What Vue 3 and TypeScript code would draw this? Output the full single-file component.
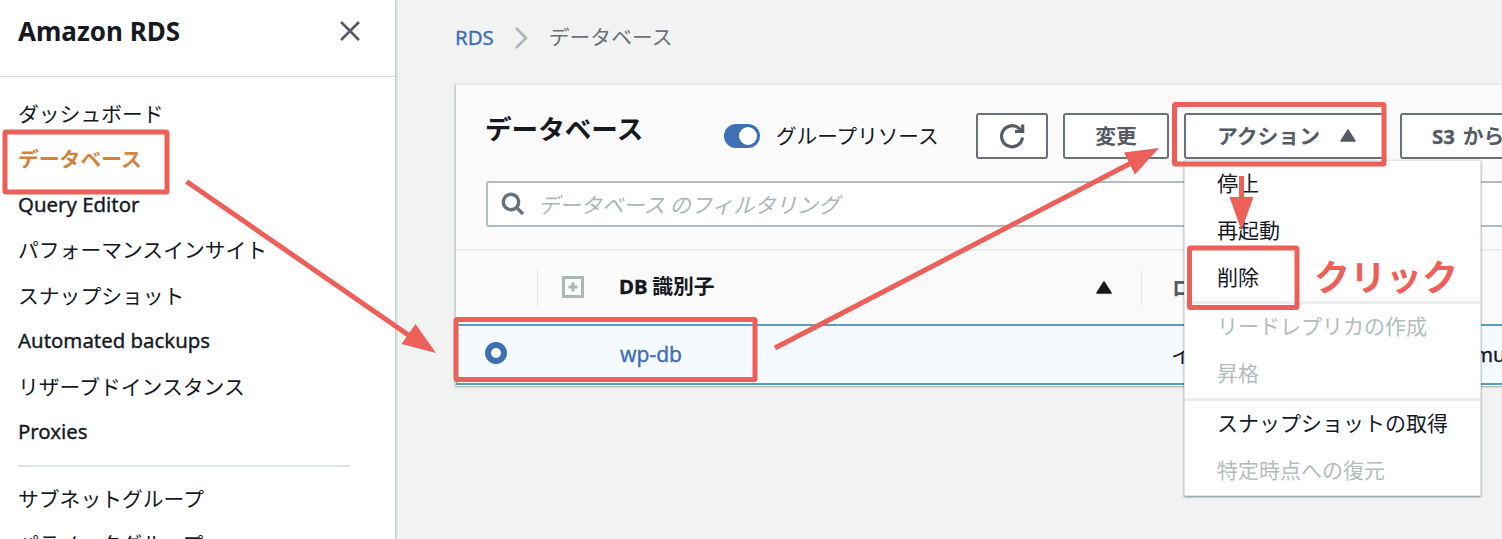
<script setup lang="ts">
interface NavItem { label: string; latin?: boolean; active?: boolean }
const primaryNav: NavItem[] = [
  { label: 'ダッシュボード' },
  { label: 'データベース', active: true },
  { label: 'Query Editor', latin: true },
  { label: 'パフォーマンスインサイト' },
  { label: 'スナップショット' },
  { label: 'Automated backups', latin: true },
  { label: 'リザーブドインスタンス' },
  { label: 'Proxies', latin: true },
]
const secondaryNav: NavItem[] = [{ label: 'サブネットグループ' }, { label: 'パラメータグループ' }]
const menuGroups: { label: string; disabled?: boolean }[][] = [
  [{ label: '停止' }, { label: '再起動' }, { label: '削除' }],
  [{ label: 'リードレプリカの作成', disabled: true }, { label: '昇格', disabled: true }],
  [{ label: 'スナップショットの取得' }, { label: '特定時点への復元', disabled: true }],
]
</script>

<template>
  <div class="app">
    <aside class="sidebar">
      <header class="side-head">
        <h1>Amazon RDS</h1>
        <svg class="close" width="22" height="22" viewBox="0 0 22 22"><path d="M2 2 20 20M20 2 2 20" /></svg>
      </header>
      <nav class="side-nav">
        <a v-for="n in primaryNav" :key="n.label" :class="{ latin: n.latin, active: n.active }">{{ n.label }}</a>
        <hr />
        <a v-for="n in secondaryNav" :key="n.label">{{ n.label }}</a>
      </nav>
    </aside>

    <main class="main">
      <div class="crumbs">
        <a class="latin">RDS</a>
        <svg width="16" height="24" viewBox="0 0 16 24"><path d="M2 2 12 12 2 22" /></svg>
        <span>データベース</span>
      </div>

      <section class="panel">
        <div class="toolbar">
          <h2>データベース</h2>
          <div class="toggle"><i></i></div>
          <span class="toggle-label">グループリソース</span>
          <button class="btn refresh">
            <svg width="26" height="26" viewBox="0 0 26 26">
              <path d="M23.500 14.500A10.500 10.500 0 1 1 20.500 5.800L23 8.500" />
              <path d="M16 8.500H23.700V1.500" />
            </svg>
          </button>
          <button class="btn edit">変更</button>
          <div class="action-wrap">
            <button class="btn action">アクション<svg width="16" height="13" viewBox="0 0 16 13"><path d="M8 1 15 12H1Z" /></svg></button>
            <div class="menu">
              <ul v-for="(g, i) in menuGroups" :key="i">
                <li v-for="m in g" :key="m.label" :class="{ disabled: m.disabled }">{{ m.label }}</li>
              </ul>
            </div>
          </div>
          <button class="btn s3"><span class="latin">S3</span> から復元</button>
        </div>
        <div class="search">
          <svg width="24" height="24" viewBox="0 0 24 24"><circle cx="10" cy="10" r="7.7" /><path d="M15.5 15.5 22 22" /></svg>
          <span>データベース のフィルタリング</span>
        </div>
        <div class="thead">
          <div class="th select"></div>
          <div class="th name">
            <svg class="expand" width="22" height="22" viewBox="0 0 22 22"><rect x="1.5" y="1.5" width="19" height="19" /><path d="M11 6.500V15.500M6.500 11H15.500" /></svg>
            <span class="name-label"><span class="latin">DB</span> 識別子</span>
            <svg class="sort" width="16" height="13" viewBox="0 0 16 13"><path d="M8 1 15 12H1Z" /></svg>
          </div>
          <div class="th role">ロール</div>
        </div>
        <div class="trow">
          <span class="radio"></span>
          <a class="latin db">wp-db</a>
          <span class="role-cell">インスタンス</span>
          <span class="latin engine">mu</span>
        </div>
      </section>
    </main>

    <svg class="notes" width="1502" height="539" viewBox="0 0 1502 539">
      <g class="boxes">
        <rect x="5" y="132" width="162" height="60" rx="1" />
        <rect x="456" y="319.500" width="299" height="60" rx="1" />
        <rect x="1174.500" y="104.500" width="209.500" height="59.500" rx="1" />
        <rect x="1189.500" y="248" width="107.500" height="59.500" rx="1" />
      </g>
      <g class="lines">
        <path d="M186.500 181.500 412 337.500M775 348 1134 161.500M1241.500 176V200" />
      </g>
      <g class="heads">
        <path d="M436 353 401.500 344 415.500 324Z" />
        <path d="M1159 148 1124 152.500 1135 174.500Z" />
        <path d="M1241.500 230.500 1229.500 197H1253.500Z" />
      </g>
    </svg>
    <div class="click-note">クリック</div>
  </div>
</template>

<style>
body { margin: 0; overflow: hidden; }
</style>

<style scoped>
* { box-sizing: border-box; }
.app {
  position: relative; width: 1502px; height: 539px; overflow: hidden; display: flex;
  background: #f1f3f3; color: #16191f;
  font: 20.8px/1 "Noto Sans CJK JP", sans-serif; white-space: nowrap;
}
.latin { font-family: "Noto Sans", sans-serif; font-size: 20.400px; -webkit-text-stroke: .35px currentColor; }
.sidebar { flex: none; width: 396px; height: 539px; background: #fff; border-right: 1px solid #c8cfcf; box-shadow: 1px 0 2px rgba(0, 28, 36, .15); }
.side-head { height: 77px; border-bottom: 1px solid #d5dbdb; padding: 0 34px 14px 18px; display: flex; align-items: center; justify-content: space-between; }
.side-head h1 { margin: 0; font: 700 26px/1 "Noto Sans", sans-serif; }
.close path { fill: none; stroke: #545b64; stroke-width: 2.600; }
.side-nav { display: flex; flex-direction: column; padding: 13.500px 45px 0 18px; }
.side-nav a { height: 45.500px; line-height: 45.500px; flex: none; }
.side-nav .active { color: #d5823f; font-weight: 700; }
.side-nav hr { width: 100%; height: 2px; margin: 10px 0 9px; border: 0; background: #e1e4e4; flex: none; }
.main { flex: none; width: 1200px; padding-left: 59px; }
.crumbs { height: 84px; display: flex; align-items: center; padding-bottom: 9px; color: #687078; }
.crumbs a { color: #3f70b5; }
.crumbs svg { margin: 0 19px 0 20px; }
.crumbs path { fill: none; stroke: #aab7b8; stroke-width: 2.600; }
.crumbs span { padding-bottom: 2px; }
.panel { width: 1140px; height: 302px; background: #fafafa; border-left: 1px solid #c9cece; border-top: 1px solid #eaeded; box-shadow: 0 1px 2px rgba(0, 28, 36, .35); }
.toolbar { height: 96px; padding: 28px 0 0 29px; display: flex; align-items: flex-start; }
.toolbar > * { flex: none; }
.toolbar h2 { margin: 1px 0 0; width: 239px; font-size: 26.600px; line-height: 28px; font-weight: 700; }
.toggle { width: 36px; height: 24px; margin-top: 11px; border-radius: 12px; background: #3f70b5; padding: 3px; display: flex; justify-content: flex-end; }
.toggle i { width: 18px; height: 18px; border-radius: 50%; background: #fff; }
.toggle-label { width: 200px; margin: 10px 0 0 16px; line-height: 24px; font-size: 20.600px; }
.btn { height: 46px; flex: none; margin: 0 15px 0 0; padding: 0; background: #fff; border: 2px solid #6a7179; border-radius: 3px; color: #545b64; font: 700 20.800px/40px "Noto Sans CJK JP", sans-serif; text-align: center; }
.refresh { width: 72px; display: flex; align-items: center; justify-content: center; }
.refresh path { fill: none; stroke: #545b64; stroke-width: 3.200; }
.edit { width: 106px; padding-bottom: 2px; }
.action-wrap { position: relative; }
.action { width: 201px; display: flex; align-items: center; padding: 0 0 2px 31px; gap: 20px; }
.action path { fill: #545b64; stroke: #545b64; stroke-width: 1.500; stroke-linejoin: round; }
.s3 { width: 220px; text-align: left; padding: 0 0 2px 30px; word-spacing: 3px; }
.menu { position: absolute; left: 0; top: 47px; z-index: 2; width: 297px; height: 336px; background: #fff; border: 1px solid #dfe3e3; box-shadow: 0 1px 2px rgba(0, 28, 36, .5); }
.menu ul { margin: 0; padding: 0; list-style: none; }
.menu ul + ul { border-top: 3px solid #eaeded; }
.menu li { height: 46.800px; line-height: 43px; padding-left: 32px; font-size: 21px; }
.menu .disabled { color: #b3bcbd; }
.search { margin-left: 30px; height: 46px; background: #fff; border: 2px solid #b3bcbd; border-radius: 3px; display: flex; align-items: center; padding-left: 13px; gap: 13px; color: #aab7b8; font-style: italic; font-size: 21.300px; }
.search span { padding-bottom: 1px; }
.search circle, .search path { fill: none; stroke: #687078; stroke-width: 3.400; }
.thead { margin-top: 22px; height: 75px; border-top: 2px solid #eaeded; display: flex; align-items: center; font-weight: 700; }
.th { height: 36px; display: flex; align-items: center; flex: none; }
.select { width: 82px; border-right: 1px solid #e2e6e6; }
.name { width: 604px; padding-left: 24px; border-right: 1px solid #e2e6e6; }
.expand, .sort { margin-top: -1px; }
.expand rect, .expand path { fill: none; stroke: #aab7b8; stroke-width: 3; }
.name-label { margin-left: 35px; width: 477px; padding-bottom: 3px; }
.sort { fill: #16191f; stroke: #16191f; stroke-width: 1.500; stroke-linejoin: round; }
.role { padding-left: 30px; color: #545b64; }
.trow { height: 61px; background: #f4faff; border: solid #5b9dbd; border-width: 2px 0 2px 1px; display: flex; align-items: center; padding-left: 29px; }
.trow > * { flex: none; }
.radio { width: 22px; height: 22px; border: 6.500px solid #3f70b5; border-radius: 50%; background: #fff; margin: -3px 0 0 -1px; }
.db { margin-left: 113px; width: 551px; color: #3f70b5; font-size: 21px; }
.role-cell { width: 303px; }
.notes { position: absolute; inset: 0; z-index: 3; }
.boxes rect { fill: none; stroke: #ed5f59; stroke-width: 5; }
.lines path { fill: none; stroke: #ed5f59; stroke-width: 5; }
.heads path { fill: #ed5f59; }
.click-note { position: absolute; z-index: 4; left: 1314px; top: 257px; color: #ed5f59; font-size: 36px; line-height: 36px; font-weight: 700; }
</style>
